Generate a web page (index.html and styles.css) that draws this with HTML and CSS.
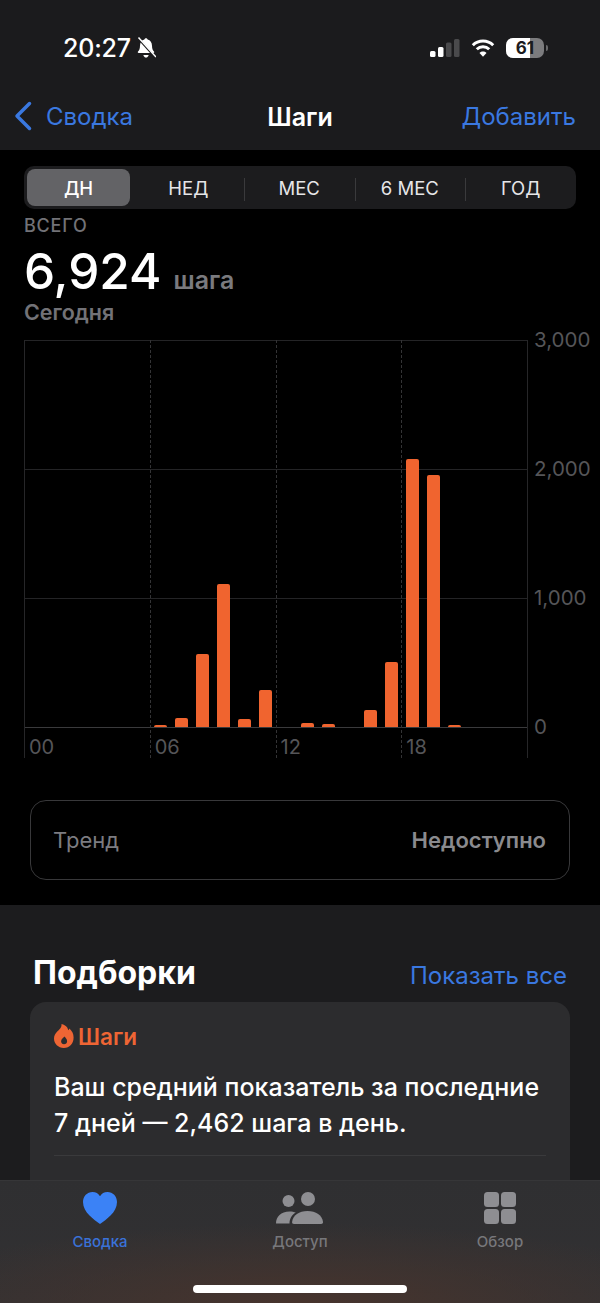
FILE: index.html
```html
<!DOCTYPE html>
<html lang="ru">
<head>
<meta charset="utf-8">
<title>Шаги</title>
<link rel="stylesheet" href="styles.css">
</head>
<body>
<div class="screen">
  <header class="top">
    <div class="status">
      <div class="status-left">
        <span class="clock">20:27</span>
        <svg class="bell" viewBox="0 0 20 22" aria-hidden="true">
          <path class="fill-white" d="M10 1.200c.9 0 1.500.6 1.600 1.400 2.900.7 4.300 3.200 4.400 6.100.1 2.800.6 4.400 2 5.800.5.6.2 1.500-.7 1.500H2.700c-.9 0-1.200-.9-.7-1.500 1.400-1.400 1.900-3 2-5.800.1-2.900 1.500-5.400 4.400-6.100.1-.8.7-1.400 1.600-1.400z"/>
          <path class="fill-white" d="M7.400 18h5.200c-.2 1.500-1.300 2.600-2.600 2.600S7.600 19.500 7.400 18z"/>
          <path class="bell-gap" d="M1.500 .5 19 20"/>
          <path class="bell-slash" d="M2.500 .5 20 20"/>
        </svg>
      </div>
      <div class="status-right">
        <svg class="signal" viewBox="0 0 30 18" aria-hidden="true">
          <rect class="fill-white" x="0" y="12" width="5.500" height="6" rx="1.500"/>
          <rect class="fill-white" x="8" y="8" width="5.500" height="10" rx="1.500"/>
          <rect class="fill-dim" x="16" y="3.500" width="5.500" height="14.500" rx="1.500"/>
          <rect class="fill-dim" x="24" y="0" width="5.500" height="18" rx="1.500"/>
        </svg>
        <svg class="wifi" viewBox="0 0 24 18" aria-hidden="true">
          <path class="wifi-arc" d="M1.800 6.300a14.500 14.500 0 0 1 20.400 0"/>
          <path class="wifi-arc" d="M5.800 10.300a8.800 8.800 0 0 1 12.400 0"/>
          <path class="fill-white" d="M12 17.800 8.500 14c2-1.900 5-1.900 7 0z"/>
        </svg>
        <div class="battery">
          <div class="battery-body"><span class="battery-fill" style="width:63%"></span><span class="battery-num">61</span></div>
          <span class="battery-nub"></span>
        </div>
      </div>
    </div>
    <nav class="nav">
      <a class="nav-back">
        <svg class="chevron" viewBox="0 0 18 30" aria-hidden="true"><path d="M15.500 2.500 3 15l12.500 12.500"/></svg>
        <span>Сводка</span>
      </a>
      <h1 class="nav-title">Шаги</h1>
      <a class="nav-action">Добавить</a>
    </nav>
  </header>

  <main class="steps">
    <div class="segments">
      <span class="segment is-active">ДН</span>
      <span class="segment">НЕД</span>
      <span class="segment has-rule">МЕС</span>
      <span class="segment has-rule">6 МЕС</span>
      <span class="segment has-rule">ГОД</span>
    </div>

    <div class="summary">
      <div class="summary-label">ВСЕГО</div>
      <div class="summary-total"><span class="summary-value">6,924</span><span class="summary-unit">шага</span></div>
      <div class="summary-date">Сегодня</div>
    </div>

    <div class="chart">
      <div class="plot">
        <div class="quarters">
          <div class="quarter"><span>00</span></div>
          <div class="quarter is-dashed"><span>06</span></div>
          <div class="quarter is-dashed"><span>12</span></div>
          <div class="quarter is-dashed"><span>18</span></div>
        </div>
        <div class="bars">
          <i class="slot"></i><i class="slot"></i><i class="slot"></i><i class="slot"></i><i class="slot"></i><i class="slot"></i>
          <i class="slot"><b class="bar" style="height:2px"></b></i>
          <i class="slot"><b class="bar" style="height:9px"></b></i>
          <i class="slot"><b class="bar" style="height:73px"></b></i>
          <i class="slot"><b class="bar" style="height:143px"></b></i>
          <i class="slot"><b class="bar" style="height:8px"></b></i>
          <i class="slot"><b class="bar" style="height:37px"></b></i>
          <i class="slot"></i>
          <i class="slot"><b class="bar" style="height:4px"></b></i>
          <i class="slot"><b class="bar" style="height:3px"></b></i>
          <i class="slot"></i>
          <i class="slot"><b class="bar" style="height:17px"></b></i>
          <i class="slot"><b class="bar" style="height:65px"></b></i>
          <i class="slot"><b class="bar" style="height:268px"></b></i>
          <i class="slot"><b class="bar" style="height:252px"></b></i>
          <i class="slot"><b class="bar" style="height:2px"></b></i>
          <i class="slot"></i><i class="slot"></i><i class="slot"></i>
        </div>
      </div>
      <div class="y-axis">
        <span>3,000</span>
        <span>2,000</span>
        <span>1,000</span>
        <span>0</span>
      </div>
    </div>

    <div class="trend">
      <span class="trend-label">Тренд</span>
      <span class="trend-value">Недоступно</span>
    </div>
  </main>

  <section class="picks">
    <div class="picks-head">
      <h2 class="picks-title">Подборки</h2>
      <a class="picks-all">Показать все</a>
    </div>
    <article class="pick-card">
      <div class="pick-tag">
        <svg class="flame" viewBox="0 0 20 24" aria-hidden="true">
          <path fill-rule="evenodd" d="M7.500 0c5 1.300 6.400 4 6.700 6.200.6-.4 1-1 1.200-1.700 2.700 2.400 4.200 5.300 4.200 9 0 5.900-4 10.500-9.800 10.500C4.200 24 0 20 0 14.600c0-2.900 1.300-4.900 3-6.800C5.200 5.500 7.900 3.900 7.500 0zM10.400 12.400c-.9 1.300-3.300 2.300-3.300 4.900 0 1.800 1.300 3 2.900 3 1.800 0 3.100-1.300 3.100-3.100 0-2.100-1.300-3.400-2.700-4.800z"/>
        </svg>
        <span>Шаги</span>
      </div>
      <p class="pick-text">Ваш средний показатель за последние 7&nbsp;дней — 2,462 шага в день.</p>
      <div class="pick-rule"></div>
    </article>
  </section>

  <footer class="tabs">
    <div class="tab is-current">
      <svg class="tab-icon" viewBox="0 0 34 32" aria-hidden="true">
        <path d="M17 32C11 27.500 0 20.500 0 10 0 4.200 4.200 0 9.500 0 12.800 0 15.500 1.600 17 4.200 18.500 1.600 21.200 0 24.500 0 29.800 0 34 4.200 34 10c0 10.500-11 17.500-17 22z"/>
      </svg>
      <span>Сводка</span>
    </div>
    <div class="tab">
      <svg class="tab-icon tab-icon-wide" viewBox="0 0 47 32" aria-hidden="true">
        <circle cx="12.500" cy="9" r="6"/>
        <circle cx="32" cy="7" r="7"/>
        <path d="M0 31.500c0-7 5-12 13.500-12 2.500 0 4.600.4 6.300 1.100-4.500 2.700-6.300 6.900-6.300 10.900z"/>
        <path d="M18 32c-1.500 0-2-.8-1.900-2 .7-6.800 7-11 15.400-11S46.300 23.200 47 30c.1 1.200-.4 2-1.900 2z"/>
      </svg>
      <span>Доступ</span>
    </div>
    <div class="tab">
      <svg class="tab-icon" viewBox="0 0 32 32" aria-hidden="true">
        <rect x="0" y="0" width="15" height="15" rx="3.500"/>
        <rect x="17" y="0" width="15" height="15" rx="3.500"/>
        <rect x="0" y="17" width="15" height="15" rx="3.500"/>
        <rect x="17" y="17" width="15" height="15" rx="3.500"/>
      </svg>
      <span>Обзор</span>
    </div>
    <div class="home-bar"></div>
  </footer>
</div>
</body>
</html>
```

FILE: styles.css
```css
* {
  box-sizing: border-box;
}

html,
body {
  margin: 0;
  padding: 0;
  background: #000;
}

body {
  font-family: Inter, "Noto Sans", "Liberation Sans", sans-serif;
  color: #fff;
}

h1,
h2,
p {
  margin: 0;
}

.screen {
  position: relative;
  width: 600px;
  height: 1303px;
  overflow: hidden;
  background: #000;
}

/* Status bar and navigation */
.top {
  height: 150px;
  background: #1b1b1d;
}

.status {
  height: 100px;
  padding: 34px 52px 0 63px;
  display: flex;
  justify-content: space-between;
}

.status-left,
.status-right {
  display: flex;
  align-items: flex-start;
}

.clock {
  font-size: 25px;
  line-height: 28px;
  font-weight: 500;
  letter-spacing: -0.2px;
}

.bell {
  width: 20px;
  height: 22px;
  margin: 3px 0 0 5px;
}

.fill-white {
  fill: #fff;
}

.fill-dim {
  fill: #4a4a4c;
}

.bell-gap {
  stroke: #1b1b1d;
  stroke-width: 2;
  fill: none;
}

.bell-slash {
  stroke: #fff;
  stroke-width: 1.500;
  fill: none;
}

.status-right {
  padding-top: 5px;
}

.signal {
  width: 30px;
  height: 18px;
}

.wifi {
  width: 24px;
  height: 18px;
  margin-left: 11px;
}

.wifi-arc {
  fill: none;
  stroke: #fff;
  stroke-width: 3;
}

.battery {
  display: flex;
  align-items: center;
  height: 20px;
  margin-left: 11px;
  margin-top: -1px;
}

.battery-body {
  position: relative;
  width: 38px;
  height: 20px;
  border-radius: 7px;
  overflow: hidden;
  background: #7c7c7e;
  display: flex;
  align-items: center;
  justify-content: center;
}

.battery-fill {
  position: absolute;
  left: 0;
  top: 0;
  bottom: 0;
  background: #fff;
}

.battery-num {
  position: relative;
  font-size: 17px;
  font-weight: 700;
  color: #1b1b1d;
}

.battery-nub {
  width: 2px;
  height: 6px;
  margin-left: 2px;
  border-radius: 0 2px 2px 0;
  background: #6a6a6c;
}

.nav {
  position: relative;
  height: 50px;
  padding: 0 24px 0 14px;
  display: flex;
  align-items: flex-start;
  justify-content: space-between;
  font-size: 24px;
  line-height: 34px;
}

.nav-back {
  display: flex;
  align-items: flex-start;
  gap: 14px;
  color: #3a78e0;
}

.chevron {
  width: 18px;
  height: 30px;
  margin-top: 1px;
}

.chevron path {
  fill: none;
  stroke: #3a78e0;
  stroke-width: 3.500;
  stroke-linecap: round;
  stroke-linejoin: round;
}

.nav-title {
  position: absolute;
  left: 0;
  right: 0;
  text-align: center;
  font-size: 25px;
  line-height: 34px;
  font-weight: 600;
}

.nav-action {
  color: #3a78e0;
}

/* Steps summary */
.steps {
  height: 755px;
  padding: 16px 0 0;
  background: #000;
}

.segments {
  display: grid;
  grid-template-columns: 106px repeat(4, 1fr);
  align-items: center;
  width: 552px;
  height: 43px;
  margin-left: 24px;
  padding: 3px 0 3px 3px;
  border-radius: 10px;
  background: #1c1c1e;
}

.segment {
  position: relative;
  height: 37px;
  display: flex;
  align-items: center;
  justify-content: center;
  font-size: 18.500px;
  color: #e6e6e8;
}

.segment.is-active {
  width: 103px;
  border-radius: 8px;
  background: #636366;
  color: #fff;
  font-weight: 500;
}

.segment.has-rule::before {
  content: "";
  position: absolute;
  left: 0;
  top: 9px;
  bottom: 5px;
  width: 1px;
  background: #3a3a3c;
}

.summary {
  padding: 5px 0 0 24px;
}

.summary-label {
  font-size: 18px;
  line-height: 24px;
  letter-spacing: 0.8px;
  font-weight: 500;
  color: #727277;
}

.summary-total {
  display: flex;
  align-items: baseline;
  gap: 12px;
  height: 56px;
  padding-top: 7px;
  line-height: 52px;
}

.summary-value {
  font-size: 49.500px;
  font-weight: 500;
  color: #fff;
}

.summary-unit {
  font-size: 25px;
  font-weight: 600;
  color: #7a7a7e;
}

.summary-date {
  padding-top: 5px;
  font-size: 21.500px;
  line-height: 26px;
  font-weight: 600;
  color: #727277;
}

/* Hourly chart */
.chart {
  display: flex;
  height: 418px;
  margin: 15px 0 0 24px;
}

.plot {
  position: relative;
  width: 504px;
  height: 418px;
  border-right: 1px solid #262628;
  background: linear-gradient(#242426, #242426) 0 0 / 100% 1px no-repeat,
    linear-gradient(#242426, #242426) 0 129px / 100% 1px no-repeat,
    linear-gradient(#242426, #242426) 0 258px / 100% 1px no-repeat,
    linear-gradient(#3a3a3c, #3a3a3c) 0 387px / 100% 1px no-repeat;
}

.quarters {
  display: grid;
  grid-template-columns: repeat(4, 1fr);
  height: 100%;
}

.quarter {
  display: flex;
  align-items: flex-end;
  padding: 0 0 0 4px;
  border-left: 1px solid #262628;
  font-size: 20px;
  line-height: 22px;
  color: #555558;
}

.quarter.is-dashed {
  border-left: 1px dashed #333335;
}

.bars {
  position: absolute;
  left: 0;
  right: 0;
  top: 0;
  height: 387px;
  display: grid;
  grid-template-columns: repeat(24, 21px);
  align-items: end;
}

.slot {
  display: flex;
  justify-content: center;
  align-items: flex-end;
}

.bar {
  display: block;
  width: 13px;
  border-radius: 2px 2px 0 0;
  background: #f0642f;
}

.y-axis {
  display: flex;
  flex-direction: column;
  margin-left: 6px;
  margin-top: -11px;
  font-size: 20.500px;
  line-height: 22px;
  color: #555558;
}

.y-axis span {
  flex: 0 0 129px;
}

/* Trend row */
.trend {
  display: flex;
  align-items: center;
  justify-content: space-between;
  width: 540px;
  height: 80px;
  margin: 42px 0 0 30px;
  padding: 0 23px 0 22px;
  border: 1px solid #38383a;
  border-radius: 16px;
  font-size: 22px;
}

.trend-label {
  color: #7c7c80;
}

.trend-value {
  font-weight: 600;
  color: #8a8a8e;
}

/* Highlights */
.picks {
  height: 398px;
  padding: 48px 30px 0;
  background: #1c1c1e;
}

.picks-head {
  display: flex;
  justify-content: space-between;
  align-items: baseline;
  padding: 0 3px;
  height: 49px;
}

.picks-title {
  font-size: 32px;
  line-height: 40px;
  font-weight: 700;
}

.picks-all {
  font-size: 24px;
  color: #3a78e0;
}

.pick-card {
  height: 220px;
  padding: 21px 24px 0;
  border-radius: 16px;
  background: #2c2c2e;
}

.pick-tag {
  display: flex;
  align-items: center;
  gap: 4px;
  height: 26px;
  font-size: 22.500px;
  font-weight: 600;
  color: #ee6534;
}

.flame {
  width: 20px;
  height: 24px;
  fill: #ee6534;
}

.pick-text {
  margin-top: 20px;
  font-size: 25px;
  line-height: 36px;
  font-weight: 500;
}

.pick-rule {
  height: 1px;
  margin-top: 14px;
  background: #3a3a3c;
}

/* Bottom tab bar */
.tabs {
  position: absolute;
  left: 0;
  right: 0;
  bottom: 0;
  height: 123px;
  padding-top: 11px;
  display: grid;
  grid-template-columns: repeat(3, 200px);
  align-items: start;
  justify-items: center;
  border-top: 1px solid #363638;
  background: radial-gradient(ellipse 420px 80px at 50% 100%, #47342d 0%, rgba(71, 52, 45, 0) 100%),
    linear-gradient(#2f2f31, #323133);
}

.tab {
  display: flex;
  flex-direction: column;
  align-items: center;
  gap: 9px;
  font-size: 15px;
  line-height: 18px;
  font-weight: 500;
  color: #77777b;
}

.tab-icon {
  width: 34px;
  height: 32px;
  fill: #8e8e92;
}

.tab-icon-wide {
  width: 47px;
}

.tab.is-current {
  color: #3a72d8;
}

.tab.is-current .tab-icon {
  fill: #3b82f6;
}

.home-bar {
  position: absolute;
  left: 193px;
  top: 104px;
  width: 214px;
  height: 8px;
  border-radius: 4px;
  background: #fff;
}
```
